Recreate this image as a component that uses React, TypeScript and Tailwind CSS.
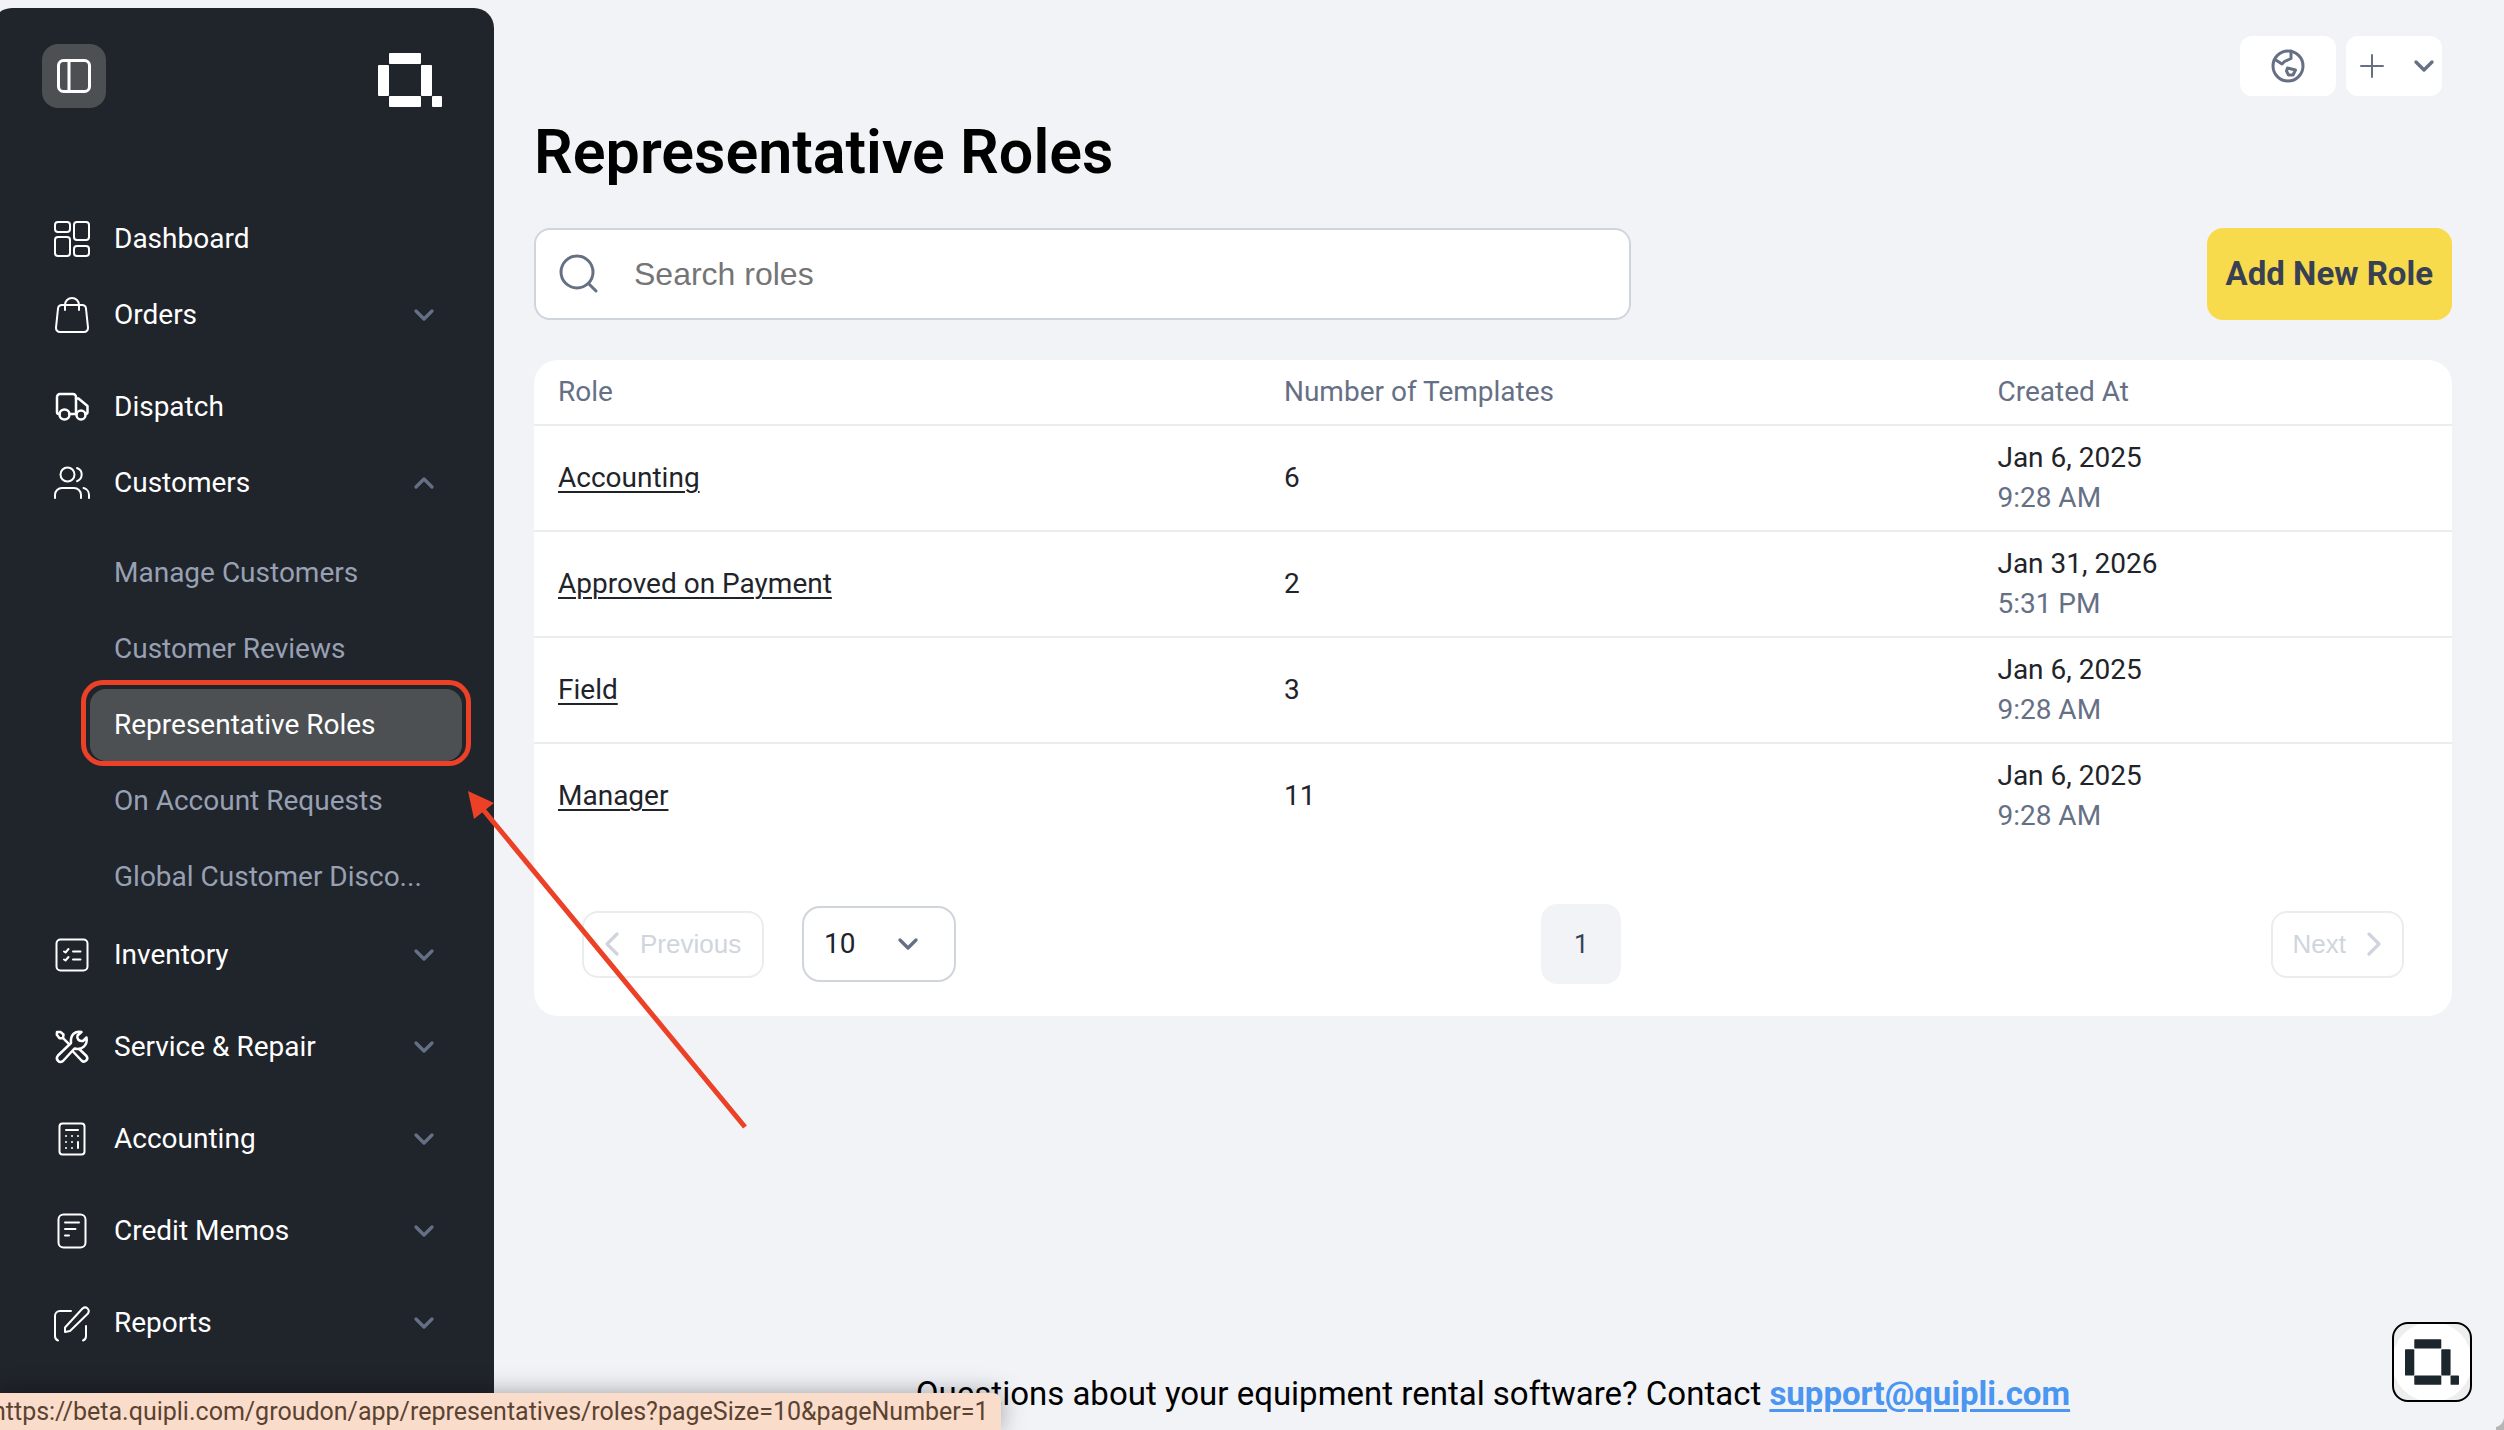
import React, { useState } from 'react';
import { ChevronDown, ChevronLeft, ChevronRight, ChevronUp } from 'lucide-react';

interface IconProps {
  children: React.ReactNode;
  strokeWidth?: number;
}

function Icon({ children, strokeWidth = 2 }: IconProps) {
  return (
    <svg
      width="40"
      height="40"
      viewBox="0 0 40 40"
      fill="none"
      stroke="currentColor"
      strokeWidth={strokeWidth}
      strokeLinecap="round"
      strokeLinejoin="round"
      className="shrink-0"
      aria-hidden="true"
    >
      {children}
    </svg>
  );
}

const icons = {
  dashboard: (
    <Icon>
      <rect x="3" y="3" width="15" height="10" rx="3" />
      <rect x="22" y="3" width="15" height="18" rx="3" />
      <rect x="3" y="18" width="15" height="19" rx="3" />
      <rect x="22" y="27" width="15" height="10" rx="3" />
    </Icon>
  ),
  orders: (
    <Icon>
      <path d="M10 10h20a4 4 0 0 1 4 3.700l2 19a4 4 0 0 1-4 4.300H8a4 4 0 0 1-4-4.300l2-19A4 4 0 0 1 10 10Z" />
      <path d="M13 15v-5a7 7 0 0 1 14 0v5" />
    </Icon>
  ),
  dispatch: (
    <Icon strokeWidth={2.5}>
      <path d="M7.500 27H7a2 2 0 0 1-2-2V10a3 3 0 0 1 3-3h13a3 3 0 0 1 3 3v17h-6.500" />
      <path d="M24 11.500h2.500l9 7.500v6a2 2 0 0 1-2 2" />
      <circle cx="12.500" cy="27.500" r="5" />
      <circle cx="29" cy="28" r="4.500" />
    </Icon>
  ),
  customers: (
    <Icon>
      <circle cx="15.500" cy="11.500" r="7" />
      <path d="M3 35v-3a7 7 0 0 1 7-7h12a7 7 0 0 1 7 7v3" />
      <path d="M25 5a7 7 0 0 1 0 13.200" />
      <path d="M31.500 25a7 7 0 0 1 5.500 7v3" />
    </Icon>
  ),
  inventory: (
    <Icon>
      <rect x="4.500" y="4.500" width="31" height="31" rx="4" />
      <path d="M12 16.500l1.500 1L16.500 14M12 24.500l1.500 1L16.500 22M21 16.500h7.500M21 24.500h7.500" />
    </Icon>
  ),
  service: (
    <Icon strokeWidth={2.5}>
      <path d="M5 5h3.500l3 2.500-.5 3.500-3.500.300-2.700-3.500ZM11.300 11.300l6 6" />
      <path d="M29.500 5c-6-1.500-11.500 2.500-10.500 11L6 28.500c-3 3.500 1 8.500 5 5.500l11.500-12.500c7.500 2 13.500-3.500 12-11l-3.500 3.500c-4 .5-6.500-2-5.500-5.500Z" />
      <path d="M21 24.500l8.500 9c3 3 7.500-1 5-4.500l-7.300-7" />
    </Icon>
  ),
  accounting: (
    <Icon>
      <rect x="7.500" y="4.500" width="25" height="31" rx="3" />
      <path d="M14 11h12M14 17h.01M20 17h.01M26 17h.01M14 23h.01M20 23h.01M26 23v6M14 29h.01M20 29h.01" />
    </Icon>
  ),
  creditMemos: (
    <Icon>
      <rect x="6.500" y="3.500" width="27" height="33" rx="5" />
      <path d="M13 11.500h14M13 18h10.500M13 24.500h4" />
    </Icon>
  ),
  reports: (
    <Icon>
      <path d="M19 8H8a5 5 0 0 0-5 5v20q0 3.500 3 4.500M34 23v10q0 3.500-3 4.500" />
      <path d="M13 29v-4.500L30.500 5.500c3.500-3 8 1 5.500 5L18 28l-5 1Z" />
    </Icon>
  ),
};

function Logo({ className }: { className: string }) {
  return (
    <svg viewBox="0 0 64 54" fill="currentColor" className={className} role="img" aria-label="Quipli">
      <rect x="11" y="0" width="32" height="11" rx="1" />
      <rect x="0" y="12" width="11" height="31" rx="1" />
      <rect x="43" y="12" width="11" height="31" rx="1" />
      <rect x="11" y="43" width="32" height="11" rx="1" />
      <rect x="54" y="43" width="10" height="11" rx="1" />
    </svg>
  );
}

interface NavItemProps {
  icon: React.ReactNode;
  label: string;
  expandable?: boolean;
  open?: boolean;
  onClick?: () => void;
}

function NavItem({ icon, label, expandable = false, open = false, onClick }: NavItemProps) {
  const className = 'flex h-[76px] w-full items-center gap-[22px] pl-[60px] pr-[54px] text-left text-white';

  if (!expandable) {
    return (
      <a href="#" className={className}>
        {icon}
        <span>{label}</span>
      </a>
    );
  }

  return (
    <button type="button" className={className} aria-expanded={open} onClick={onClick}>
      {icon}
      <span className="flex-1">{label}</span>
      {open ? (
        <ChevronUp size={32} strokeWidth={2.5} className="text-[#667085]" />
      ) : (
        <ChevronDown size={32} strokeWidth={2.5} className="text-[#667085]" />
      )}
    </button>
  );
}

const customerLinks = [
  'Manage Customers',
  'Customer Reviews',
  'Representative Roles',
  'On Account Requests',
  'Global Customer Disco...',
];

const lowerNav = [
  { icon: icons.inventory, label: 'Inventory' },
  { icon: icons.service, label: 'Service & Repair' },
  { icon: icons.accounting, label: 'Accounting' },
  { icon: icons.creditMemos, label: 'Credit Memos' },
  { icon: icons.reports, label: 'Reports' },
];

function Sidebar() {
  const [customersOpen, setCustomersOpen] = useState(true);

  return (
    <aside className="mt-2 -ml-2 w-[502px] shrink-0 rounded-t-[20px] bg-[#20242b] text-[28px] leading-9">
      <div className="flex items-start justify-between pt-9 pr-[52px] pl-[50px]">
        <button
          type="button"
          aria-label="Toggle sidebar"
          className="flex size-16 items-center justify-center rounded-2xl bg-[#4c5053] text-white"
        >
          <Icon strokeWidth={3}>
            <rect x="4.500" y="4.500" width="31" height="31" rx="5" />
            <path d="M15 5v30" />
          </Icon>
        </button>
        <Logo className="mt-[9px] h-[54px] w-16 text-white" />
      </div>

      <nav className="mt-[93px]">
        <NavItem icon={icons.dashboard} label="Dashboard" />
        <div className="mb-4">
          <NavItem icon={icons.orders} label="Orders" expandable />
        </div>
        <NavItem icon={icons.dispatch} label="Dispatch" />
        <NavItem
          icon={icons.customers}
          label="Customers"
          expandable
          open={customersOpen}
          onClick={() => setCustomersOpen(!customersOpen)}
        />
        {customersOpen && (
          <ul className="mt-4 mr-8 ml-[98px] space-y-1 pb-1">
            {customerLinks.map((label) =>
              label === 'Representative Roles' ? (
                <li key={label} className="relative">
                  <a
                    href="#"
                    aria-current="page"
                    className="flex h-[72px] items-center rounded-2xl bg-[#4c5053] px-6 whitespace-nowrap text-white"
                  >
                    {label}
                  </a>
                  {/* callout ring */}
                  <span className="pointer-events-none absolute -inset-x-[9px] -top-[9px] -bottom-[5px] rounded-[22px] border-[5px] border-[#ec4126]" />
                </li>
              ) : (
                <li key={label}>
                  <a
                    href="#"
                    className="flex h-[72px] items-center px-6 whitespace-nowrap text-[#98a0b3]"
                  >
                    {label}
                  </a>
                </li>
              ),
            )}
          </ul>
        )}
        <div className="space-y-4">
          {lowerNav.map((item) => (
            <NavItem key={item.label} icon={item.icon} label={item.label} expandable />
          ))}
        </div>
      </nav>
    </aside>
  );
}

const roles = [
  { name: 'Accounting', templates: 6, date: 'Jan 6, 2025', time: '9:28 AM' },
  { name: 'Approved on Payment', templates: 2, date: 'Jan 31, 2026', time: '5:31 PM' },
  { name: 'Field', templates: 3, date: 'Jan 6, 2025', time: '9:28 AM' },
  { name: 'Manager', templates: 11, date: 'Jan 6, 2025', time: '9:28 AM' },
];

function RolesTable() {
  return (
    <table className="w-full table-fixed text-left text-[28px] leading-10 text-[#1f242b]">
      <thead>
        <tr className="h-[65px] border-b-2 border-[#eaecf0] text-[#667085]">
          <th className="w-[37.85%] px-6 font-normal">Role</th>
          <th className="w-[37.2%] px-6 font-normal">Number of Templates</th>
          <th className="px-6 font-normal">Created At</th>
        </tr>
      </thead>
      <tbody>
        {roles.map((role) => (
          <tr key={role.name} className="h-[106px] border-b-2 border-[#eaecf0] last:border-white">
            <td className="px-6">
              <a href="#" className="underline decoration-2 underline-offset-4">
                {role.name}
              </a>
            </td>
            <td className="px-6">{role.templates}</td>
            <td className="px-6">
              <div>{role.date}</div>
              <div className="text-[#667085]">{role.time}</div>
            </td>
          </tr>
        ))}
      </tbody>
    </table>
  );
}

function Pagination() {
  const [pageSize, setPageSize] = useState('10');

  return (
    <div className="flex items-center justify-between px-12 pt-[54px] pb-8">
      <div className="flex items-center gap-[38px]">
        <button
          type="button"
          disabled
          className="flex h-[67px] w-[182px] items-center gap-2 rounded-2xl border-2 border-[#eaecf0] pl-2 font-['Liberation_Sans',sans-serif] text-[26px] text-[#d0d5dd]"
        >
          <ChevronLeft size={40} strokeWidth={2} />
          Previous
        </button>
        <div className="relative">
          <select
            aria-label="Rows per page"
            value={pageSize}
            onChange={(e) => setPageSize(e.target.value)}
            className="h-[76px] w-[154px] appearance-none rounded-[18px] border-2 border-[#d0d5dd] bg-white pl-5 text-[28px] text-[#1f242b]"
          >
            <option>10</option>
            <option>25</option>
            <option>50</option>
          </select>
          <ChevronDown
            size={32}
            strokeWidth={2.5}
            className="pointer-events-none absolute top-[22px] right-8 text-[#667085]"
          />
        </div>
      </div>
      <button
        type="button"
        aria-current="page"
        className="mr-16 size-20 rounded-2xl bg-[#f2f3f7] text-[26px] text-[#384152]"
      >
        1
      </button>
      <button
        type="button"
        disabled
        className="flex h-[67px] items-center gap-2 rounded-2xl border-2 border-[#eaecf0] pr-2 pl-5 font-['Liberation_Sans',sans-serif] text-[26px] text-[#d0d5dd]"
      >
        Next
        <ChevronRight size={40} strokeWidth={2} />
      </button>
    </div>
  );
}

export default function App() {
  const [query, setQuery] = useState('');

  return (
    <div className="relative flex min-h-screen overflow-hidden bg-[#f2f3f7] font-['Roboto',sans-serif]">
      <Sidebar />

      <main className="flex min-w-0 flex-1 flex-col pt-9 pr-[52px] pb-4 pl-10">
        <div className="mr-[10px] flex justify-end gap-[10px] text-[#667085]">
          <button
            type="button"
            aria-label="View site"
            className="flex h-[60px] w-24 items-center justify-center rounded-xl bg-white"
          >
            <Icon strokeWidth={3}>
              <circle cx="20" cy="20" r="15" />
              <path d="M7 13.500l7 4.500 2.500-2.500 6.500-3V5M19.500 22l8 2-2.500 5h-4.500L18.500 25Z" />
            </Icon>
          </button>
          <button
            type="button"
            aria-label="Create"
            className="flex h-[60px] w-24 items-center justify-between rounded-xl bg-white pr-0.5 pl-1.5"
          >
            <Icon>
              <path d="M20 9v22M9 20h22" />
            </Icon>
            <ChevronDown size={32} strokeWidth={2.5} />
          </button>
        </div>

        <h1 className="mt-5 mb-10 text-[61px] leading-[72px] font-semibold text-black">
          Representative Roles
        </h1>

        <div className="flex items-center justify-between">
          <label className="flex h-[92px] w-[57.2%] items-center gap-9 rounded-2xl border-2 border-[#d0d5dd] bg-white pr-6 pl-[22px] text-[#667085]">
            <Icon strokeWidth={3}>
              <circle cx="19" cy="18" r="16" />
              <path d="M31 30l7 7" />
            </Icon>
            <input
              type="text"
              aria-label="Search roles"
              placeholder="Search roles"
              value={query}
              onChange={(e) => setQuery(e.target.value)}
              className="min-w-0 flex-1 font-['Liberation_Sans',sans-serif] text-[32px] text-[#1f242b] outline-none placeholder:text-[#757575]"
            />
          </label>
          <button
            type="button"
            className="h-[92px] rounded-2xl bg-[#f7db4d] px-[19px] text-[33px] font-bold text-[#384152]"
          >
            Add New Role
          </button>
        </div>

        <section className="mt-10 overflow-hidden rounded-3xl bg-white">
          <RolesTable />
          <Pagination />
        </section>

        <footer className="mt-auto text-center text-[33px] leading-10 text-black">
          Questions about your equipment rental software? Contact{' '}
          <a
            href="mailto:support@quipli.com"
            className="font-bold text-[#4a96f0] underline decoration-3 underline-offset-4"
          >
            support@quipli.com
          </a>
        </footer>
      </main>

      {/* Callout arrow */}
      <svg
        width="282"
        height="340"
        viewBox="0 0 282 340"
        className="pointer-events-none absolute top-[790px] left-[467px]"
        aria-hidden="true"
      >
        <path d="M14 17L278 337" stroke="#ec4126" strokeWidth="5" />
        <path d="M1 1l26 12-20 16Z" fill="#ec4126" />
      </svg>

      {/* Help launcher */}
      <button
        type="button"
        aria-label="Open help"
        className="absolute right-8 bottom-7 flex size-20 items-center justify-center overflow-hidden rounded-2xl border-2 border-black bg-[#eeeeee]"
      >
        <span className="flex size-20 shrink-0 items-center justify-center rounded-full bg-white">
          <Logo className="h-[46px] w-[54px] text-[#1c262d]" />
        </span>
      </button>

      {/* Window corner */}
      <svg width="8" height="12" viewBox="0 0 8 12" className="absolute right-0 bottom-0" aria-hidden="true">
        <path d="M8 0Q7 7 0 9v3h8Z" fill="#b5b5b5" />
      </svg>

      {/* Link preview */}
      <div className="absolute bottom-0 left-0 flex h-[37px] items-center rounded-tr-lg bg-[#fadccb] pr-3 text-[25px] whitespace-nowrap text-[#5b4331] shadow-[0_0_24px_rgba(0,0,0,0.35)]">
        <span className="-ml-2">
          https://beta.quipli.com/groudon/app/representatives/roles?pageSize=10&amp;pageNumber=1
        </span>
      </div>
    </div>
  );
}
